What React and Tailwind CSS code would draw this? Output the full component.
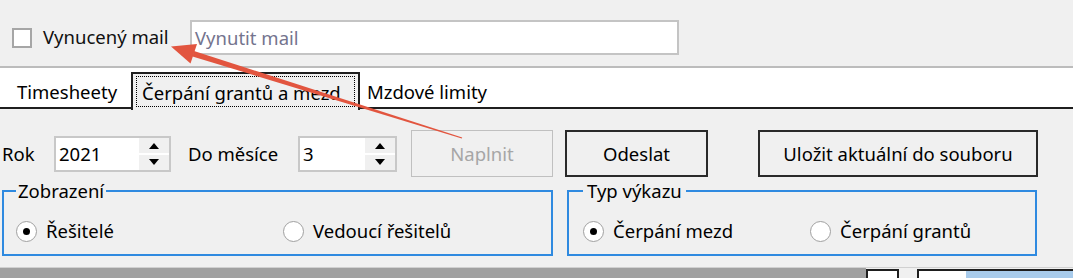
const font = { fontFamily: '"Segoe UI", "Noto Sans", "Open Sans", sans-serif' };

function Spin({ value, width }) {
  return (
    <div className={`flex h-[36px] ${width} border-2 border-[#c8c8c8] bg-white`}>
      <div className="flex flex-1 items-center pl-[3px] text-black">{value}</div>
      <div className="flex w-[30px] flex-col bg-[#f0f0f0] py-[1px]">
        <div className="flex flex-1 items-center justify-center">
          <svg width="10" height="6" viewBox="0 0 10 6"><path d="M0 6 L5 0 L10 6 Z" fill="#000" /></svg>
        </div>
        <div className="h-[2px] bg-white" />
        <div className="flex flex-1 items-center justify-center">
          <svg width="10" height="6" viewBox="0 0 10 6"><path d="M0 0 L5 6 L10 0 Z" fill="#000" /></svg>
        </div>
      </div>
    </div>
  );
}

function Radio({ checked, label, className = '' }) {
  return (
    <div className={`flex items-center gap-[9px] ${className}`}>
      <span className="flex h-[21px] w-[21px] shrink-0 items-center justify-center rounded-full border border-[#a0a0a0] bg-white">
        {checked && <span className="h-[7px] w-[7px] rounded-full bg-black" />}
      </span>
      <span className="text-black">{label}</span>
    </div>
  );
}

export default function App() {
  return (
    <div className="relative h-[278px] w-[1073px] overflow-hidden bg-[#f0f0f0] text-[18.5px] leading-[22px]" style={font}>
      {/* top row */}
      <div className="flex h-[66px] items-start pt-[20px]">
        <div className="ml-[12px] mt-[8px] h-[20px] w-[20px] shrink-0 border-2 border-[#a6a6a6] bg-white" />
        <span className="ml-[11px] mt-[6px] w-[147px] text-[#111]">Vynucený mail</span>
        <div className="flex h-[35px] w-[489px] items-center border-2 border-[#c4c4c4] bg-white pl-[3px] text-[#74748e]">
          Vynutit mail
        </div>
      </div>

      {/* tabs */}
      <div className="flex h-[43px] items-end border-y-2 border-t-[#bcbcbc] border-b-[#1e1e1e] bg-white">
        <span className="mb-[4px] w-[131px] pl-[17px] text-black">Timesheety</span>
        <div className="-mb-[3px] h-[38px] w-[229px] border-2 border-b-0 border-[#1e1e1e] bg-[#f0f0f0] px-[3px] pt-[2px] pb-[3px]">
          <div className="flex h-full items-center border border-dotted border-black pl-[5px] pt-[3px] text-black">
            Čerpání grantů a mezd
          </div>
        </div>
        <span className="mb-[4px] ml-[7px] text-black">Mzdové limity</span>
      </div>

      {/* controls */}
      <div className="mt-[21px] flex h-[47px] items-center">
        <span className="ml-[2px] w-[52px] text-black">Rok</span>
        <Spin value="2021" width="w-[117px]" />
        <span className="ml-[17px] w-[110px] text-black">Do měsíce</span>
        <Spin value="3" width="w-[99px]" />
        <button className="ml-[14px] h-[47px] w-[142px] border border-[#c0c0c0] bg-[#f0f0f0] text-[#a6a6a6]">Naplnit</button>
        <button className="ml-[12px] h-[47px] w-[143px] border-2 border-[#2a2a2a] bg-[#f0f0f0] text-black">Odeslat</button>
        <button className="ml-[50px] h-[47px] w-[280px] border-2 border-[#2a2a2a] bg-[#f0f0f0] text-black">Uložit aktuální do souboru</button>
      </div>

      {/* groups */}
      <div className="mt-[3px] flex">
        <fieldset className="ml-[2px] h-[76px] w-[551px] border-2 border-[#2f8ae0] px-[12px]">
          <legend className="px-[2px] text-black">Zobrazení</legend>
          <div className="mt-[18px] flex">
            <Radio checked label="Řešitelé" className="w-[267px]" />
            <Radio label="Vedoucí řešitelů" />
          </div>
        </fieldset>
        <fieldset className="ml-[14px] h-[76px] w-[470px] border-2 border-[#2f8ae0] px-[14px]">
          <legend className="px-[4px] text-black">Typ výkazu</legend>
          <div className="mt-[18px] flex">
            <Radio checked label="Čerpání mezd" className="w-[227px]" />
            <Radio label="Čerpání grantů" />
          </div>
        </fieldset>
      </div>

      {/* bottom strip */}
      <div className="mt-[11px] flex h-[12px] border-t border-[#d0d0d0]">
        <div className="h-full w-[866px] bg-[#a0a0a0]" />
        <div className="mt-[1px] h-full w-[33px] border-2 border-b-0 border-[#1e1e1e] bg-white" />
        <div className="w-[18px]" />
        <div className="mt-[1px] h-full w-[49px] border-2 border-b-0 border-r-0 border-[#1e1e1e] bg-white" />
        <div className="mt-[1px] h-full flex-1 border-t-2 border-[#1e1e1e] bg-[#a8cbeb]" />
      </div>

      {/* annotation arrow */}
      <svg className="pointer-events-none absolute left-0 top-0" width="1073" height="278">
        <polygon points="194,51 462.2,137.5 461.8,138.5 192.5,56.5" fill="#e2553f" />
        <polygon points="171,46.5 197,44 190.5,63.5" fill="#e2553f" />
      </svg>
    </div>
  );
}
